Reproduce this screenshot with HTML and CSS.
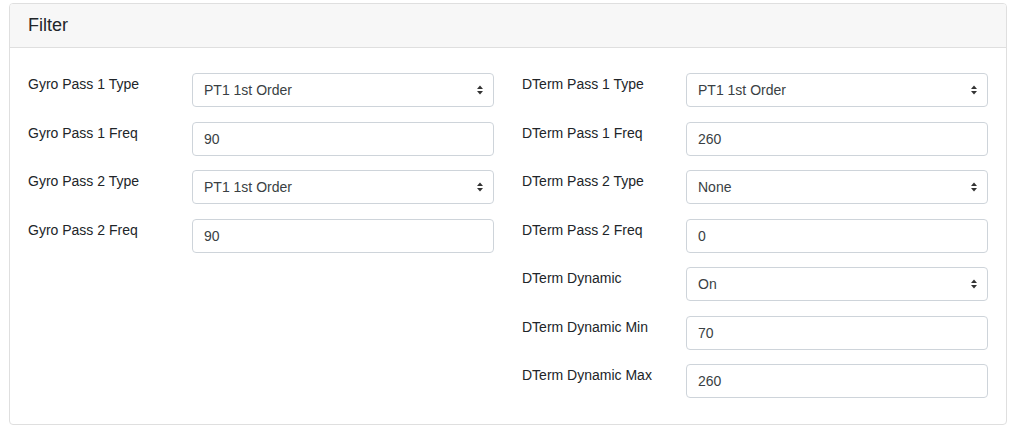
FILE: index.html
```html
<!DOCTYPE html>
<html lang="en">
<head>
<meta charset="utf-8">
<title>Filter</title>
<link rel="stylesheet" href="styles.css">
</head>
<body>
<div class="page">
  <div class="card">
    <div class="card-header">Filter</div>
    <div class="card-body">
      <div class="col">
        <div class="field">
          <label class="label">Gyro Pass 1 Type</label>
          <div class="select-wrap">
            <select class="control"><option>PT1 1st Order</option></select>
            <span class="arrows"><svg width="6" height="10" viewBox="0 0 6 10"><polygon points="0,4 3,0.5 6,4"/><polygon points="0,6 3,9.5 6,6"/></svg></span>
          </div>
        </div>
        <div class="field">
          <label class="label">Gyro Pass 1 Freq</label>
          <input class="control" type="text" value="90">
        </div>
        <div class="field">
          <label class="label">Gyro Pass 2 Type</label>
          <div class="select-wrap">
            <select class="control"><option>PT1 1st Order</option></select>
            <span class="arrows"><svg width="6" height="10" viewBox="0 0 6 10"><polygon points="0,4 3,0.5 6,4"/><polygon points="0,6 3,9.5 6,6"/></svg></span>
          </div>
        </div>
        <div class="field">
          <label class="label">Gyro Pass 2 Freq</label>
          <input class="control" type="text" value="90">
        </div>
      </div>
      <div class="col">
        <div class="field">
          <label class="label">DTerm Pass 1 Type</label>
          <div class="select-wrap">
            <select class="control"><option>PT1 1st Order</option></select>
            <span class="arrows"><svg width="6" height="10" viewBox="0 0 6 10"><polygon points="0,4 3,0.5 6,4"/><polygon points="0,6 3,9.5 6,6"/></svg></span>
          </div>
        </div>
        <div class="field">
          <label class="label">DTerm Pass 1 Freq</label>
          <input class="control" type="text" value="260">
        </div>
        <div class="field">
          <label class="label">DTerm Pass 2 Type</label>
          <div class="select-wrap">
            <select class="control"><option>None</option></select>
            <span class="arrows"><svg width="6" height="10" viewBox="0 0 6 10"><polygon points="0,4 3,0.5 6,4"/><polygon points="0,6 3,9.5 6,6"/></svg></span>
          </div>
        </div>
        <div class="field">
          <label class="label">DTerm Pass 2 Freq</label>
          <input class="control" type="text" value="0">
        </div>
        <div class="field">
          <label class="label">DTerm Dynamic</label>
          <div class="select-wrap">
            <select class="control"><option>On</option></select>
            <span class="arrows"><svg width="6" height="10" viewBox="0 0 6 10"><polygon points="0,4 3,0.5 6,4"/><polygon points="0,6 3,9.5 6,6"/></svg></span>
          </div>
        </div>
        <div class="field">
          <label class="label">DTerm Dynamic Min</label>
          <input class="control" type="text" value="70">
        </div>
        <div class="field">
          <label class="label">DTerm Dynamic Max</label>
          <input class="control" type="text" value="260">
        </div>
      </div>
    </div>
  </div>
</div>
</body>
</html>
```

FILE: styles.css
```css
html, body {
  margin: 0;
  padding: 0;
  background: #fff;
}

body {
  font-family: "Liberation Sans", Arial, Helvetica, sans-serif;
  font-size: 14px;
  line-height: 21px;
  color: #212529;
}

.page {
  padding: 3px 8px 0 9px;
}

.card {
  border: 1px solid #dfdfdf;
  border-radius: 4px;
  background: #fff;
  overflow: hidden;
}

.card-header {
  height: 43px;
  display: flex;
  align-items: center;
  padding: 0 18px;
  background: #f7f7f7;
  border-bottom: 1px solid #dfdfdf;
  font-size: 18px;
  font-weight: 500;
  color: #212529;
}

.card-body {
  display: grid;
  grid-template-columns: 1fr 1fr;
  column-gap: 28px;
  align-items: start;
  padding: 25px 18px 26px 18px;
}

.col {
  display: flex;
  flex-direction: column;
  gap: 14.5px;
}

.field {
  display: grid;
  grid-template-columns: 164px 1fr;
  align-items: start;
}

.label {
  display: block;
  line-height: 21px;
  padding-top: 1px;
}

.select-wrap {
  position: relative;
}

.control {
  box-sizing: border-box;
  display: block;
  width: 100%;
  height: 34px;
  margin: 0;
  padding: 0 11px;
  border: 1px solid #ced4da;
  border-radius: 4px;
  background: #fff;
  font-family: inherit;
  font-size: 14px;
  color: #3a3f44;
  outline: none;
  -webkit-appearance: none;
  appearance: none;
}

.arrows {
  position: absolute;
  right: 11px;
  top: 12px;
  width: 6px;
  height: 10px;
  pointer-events: none;
}

.arrows svg {
  display: block;
  fill: #333;
}
```
